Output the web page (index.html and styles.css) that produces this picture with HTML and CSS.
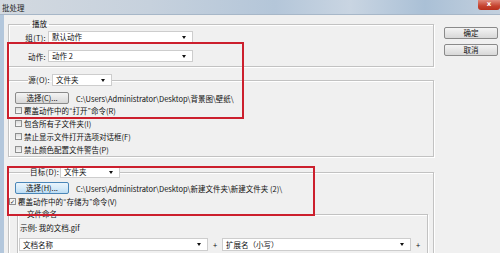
FILE: index.html
```html
<!DOCTYPE html>
<html lang="zh-CN">
<head>
    <meta charset="UTF-8">
    <title>批处理</title>
    <link rel="stylesheet" href="styles.css">
</head>
<body>
    <div class="window">
        <div class="titlebar">
            <span class="title">批处理</span>
            <span class="close">x</span>
        </div>
        <div class="frame">
            <div class="main">
                <fieldset class="group play">
                    <legend>播放</legend>
                    <div class="row">
                        <label>组(T):</label>
                        <div class="select wide">默认动作</div>
                    </div>
                    <div class="row second">
                        <label>动作:</label>
                        <div class="select wide">动作 2</div>
                    </div>
                </fieldset>

                <fieldset class="group source">
                    <legend>
                        <label>源(O):</label>
                        <div class="select small">文件夹</div>
                    </legend>
                    <div class="pick">
                        <button class="btn">选择(C)...</button>
                        <span class="path">C:\Users\Administrator\Desktop\背景图\壁纸\</span>
                    </div>
                    <div class="check"><span class="box"></span>覆盖动作中的<span class="q">“</span>打开<span class="q">”</span>命令(R)</div>
                    <div class="check"><span class="box"></span>包含所有子文件夹(I)</div>
                    <div class="check"><span class="box"></span>禁止显示文件打开选项对话框(F)</div>
                    <div class="check"><span class="box"></span>禁止颜色配置文件警告(P)</div>
                </fieldset>

                <fieldset class="group target">
                    <legend>
                        <label>目标(D):</label>
                        <div class="select small">文件夹</div>
                    </legend>
                    <div class="pick">
                        <button class="btn focus">选择(H)...</button>
                        <span class="path">C:\Users\Administrator\Desktop\新建文件夹\新建文件夹 (2)\</span>
                    </div>
                    <div class="check flush"><span class="box on">✓</span>覆盖动作中的<span class="q">“</span>存储为<span class="q">”</span>命令(V)</div>

                    <fieldset class="group naming">
                        <legend>文件命名</legend>
                        <div class="example">示例: 我的文档.gif</div>
                        <div class="name-row">
                            <div class="select part">文档名称</div>
                            <span class="plus">+</span>
                            <div class="select part">扩展名（小写）</div>
                            <span class="plus">+</span>
                        </div>
                    </fieldset>
                </fieldset>
            </div>

            <div class="side">
                <button class="btn">确定</button>
                <button class="btn">取消</button>
            </div>
        </div>

        <div class="mark mark-action"></div>
        <div class="mark mark-target"></div>
    </div>
</body>
</html>
```

FILE: styles.css
```css
* {
    box-sizing: border-box;
}
body {
    margin: 0;
    font-family: "Noto Sans CJK SC", "Liberation Sans", sans-serif;
    font-size: 7.5px;
    color: #111;
    background: #f0f0f0;
}
.window {
    position: relative;
    width: 500px;
    height: 253px;
    overflow: hidden;
    background: #f0f0f0;
}
.titlebar {
    height: 15px;
    display: flex;
    align-items: flex-start;
    justify-content: space-between;
    background: linear-gradient(90deg, #d3d9e0 0%, #c6d1dd 30%, #b4c6d9 55%, #c9d5e2 70%, #aac0d6 85%, #c3d0de 100%);
    border-bottom: 1px solid #a7b7c8;
}
.title {
    padding: 3px 0 0 2px;
    line-height: 9px;
    color: #222;
}
.close {
    width: 22px;
    height: 10px;
    border-radius: 0 0 3px 3px;
    background: linear-gradient(#e08a7c, #c5432f 60%, #b8301d);
    color: #fff;
    font-family: "DejaVu Sans", sans-serif;
    font-weight: bold;
    font-size: 7px;
    line-height: 9px;
    text-align: center;
}
.frame {
    display: flex;
    height: 238px;
    border-left: 4px solid #b3c7dc;
    padding: 4px 0 0 4px;
}
.main {
    width: 426px;
}
.side {
    width: 54px;
    margin-left: 10px;
    padding-top: 8px;
    display: flex;
    flex-direction: column;
    gap: 5px;
}

/* group boxes */
.group {
    margin: 0;
    padding: 0;
    min-width: 0;
    border: 1px solid #c2c2c2;
    box-shadow: inset 1px 1px 0 #fff, 1px 1px 0 #fff;
}
.group legend {
    padding: 0 2px;
    line-height: 10px;
}
.play legend {
    margin-left: 12px;
}
.play {
    padding: 2px 0 4px 9px;
}
.row {
    display: flex;
    align-items: center;
    height: 12px;
}
.row.second {
    margin-top: 7px;
}
.row label {
    width: 28px;
    margin-right: 2px;
    text-align: right;
    letter-spacing: 0.3px;
}
.source {
    margin-top: 7px;
}
.target {
    margin-top: 9px;
}
.source legend,
.target legend {
    display: flex;
    align-items: center;
    height: 12px;
    padding: 0;
}
.source legend {
    margin-left: 19px;
}
.target legend {
    margin-left: 21px;
}
.source legend label {
    width: 22px;
}
.target legend label {
    width: 28px;
}
.source legend label,
.target legend label {
    flex-shrink: 0;
    margin-right: 2px;
    white-space: nowrap;
    text-align: right;
    letter-spacing: 0.3px;
}

/* controls */
.select {
    position: relative;
    flex-shrink: 0;
    height: 12px;
    display: flex;
    align-items: center;
    padding-left: 3px;
    background: #fff;
    border: 1px solid #cdcdcd;
    line-height: 10px;
    white-space: nowrap;
}
.select::after {
    content: "";
    position: absolute;
    right: 6px;
    top: 4px;
    border-left: 2.5px solid transparent;
    border-right: 2.5px solid transparent;
    border-top: 3px solid #111;
}
.select.wide {
    width: 145px;
}
.select.small {
    width: 60px;
}
.select.part {
    width: 189px;
    height: 13px;
}
.btn {
    height: 12px;
    width: 54px;
    padding: 0;
    border: 1px solid #8a8a8a;
    border-radius: 2px;
    background: linear-gradient(#f4f4f4, #e6e6e6 50%, #d8d8d8);
    font-family: inherit;
    font-size: 7.5px;
    line-height: 10px;
    color: #111;
}
.btn.focus {
    border-color: #4a86b8;
    background: linear-gradient(#eaf4fc, #d7ebf9 50%, #bcdcf4);
}
.pick {
    display: flex;
    align-items: center;
    padding-left: 6px;
}
.source .pick {
    margin-top: 6px;
}
.target .pick {
    margin-top: 4px;
}
.path {
    margin-left: 7px;
}
.check {
    display: flex;
    align-items: center;
    height: 13px;
    padding-left: 6px;
}
.check.flush {
    padding-left: 0;
    margin-top: 1px;
}
.q {
    font-family: "Liberation Sans", sans-serif;
    padding: 0 0.5px;
}
.box {
    width: 7px;
    height: 7px;
    margin-right: 2px;
    border: 1px solid #8e8f8f;
    background: linear-gradient(#dcdcdc, #f7f7f7);
    font-family: "DejaVu Sans", sans-serif;
    font-size: 6px;
    line-height: 5px;
    text-align: center;
    color: #222;
}
.box.on {
    background: #f4f4f4;
}

/* file naming */
.naming {
    margin: 0 5px 0 8px;
    padding: 3px 0 20px 1px;
}
.naming legend {
    margin-left: 8px;
}
.example {
    padding-left: 1px;
    line-height: 10px;
}
.name-row {
    display: flex;
    align-items: center;
    margin-top: 5px;
}
.plus {
    width: 14px;
    text-align: center;
}

/* red annotation boxes */
.mark {
    position: absolute;
    border: 2px solid #cc1f2d;
}
.mark-action {
    left: 7px;
    top: 42px;
    width: 237px;
    height: 77px;
}
.mark-target {
    left: 7px;
    top: 166px;
    width: 308px;
    height: 50px;
}
```
